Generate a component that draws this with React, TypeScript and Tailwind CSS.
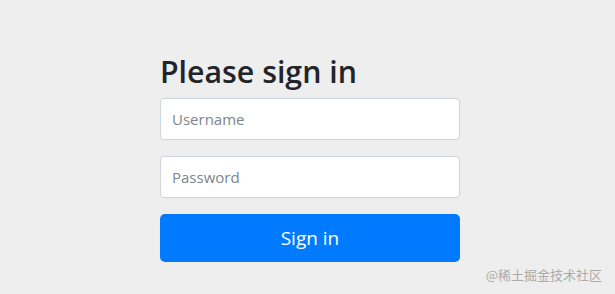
import React from "react";

export default function App() {
  return (
    <div
      className="relative w-[615px] h-[294px] bg-[#eeeeee] overflow-hidden"
      style={{ fontFamily: '"Open Sans", "Noto Sans", sans-serif' }}
    >
      <div className="flex justify-center pl-[5px] pt-[54px]">
        <form className="w-[300px] flex flex-col">
          <h2 className="text-[30.3px] leading-[36px] font-semibold text-[#212529] mb-[8px]">
            Please sign in
          </h2>
          <input
            type="text"
            placeholder="Username"
            className="h-[42px] w-full bg-white border border-[#ced4da] rounded-[4px] px-[11px] text-[15px] text-[#495057] placeholder:text-[#7d848b] outline-none"
          />
          <input
            type="password"
            placeholder="Password"
            className="mt-[16px] h-[42px] w-full bg-white border border-[#ced4da] rounded-[4px] px-[11px] text-[15px] text-[#495057] placeholder:text-[#7d848b] outline-none"
          />
          <button
            type="button"
            className="mt-[16px] h-[48px] w-full bg-[#007bff] text-white rounded-[5px] text-[19px]"
          >
            Sign in
          </button>
        </form>
      </div>
      <div
        className="absolute right-[13px] bottom-[10px] text-[13px] text-[#ababab]"
        style={{ fontFamily: '"Noto Sans CJK SC", sans-serif' }}
      >
        @稀土掘金技术社区
      </div>
    </div>
  );
}
